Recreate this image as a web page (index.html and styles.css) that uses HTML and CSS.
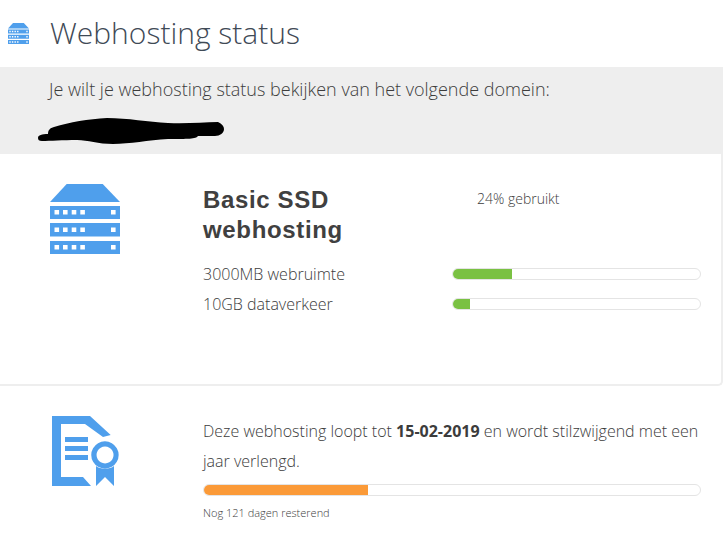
FILE: index.html
```html
<!DOCTYPE html>
<html lang="nl">
<head>
    <meta charset="UTF-8">
    <title>Webhosting status</title>
    <link rel="stylesheet" href="styles.css">
</head>
<body>
    <div class="page-title">
        <svg class="title-icon" viewBox="0 0 70 70"><use href="#server"/></svg>
        <h1>Webhosting status</h1>
    </div>

    <div class="domain-box">
        <p>Je wilt je webhosting status bekijken van het volgende domein:</p>
        <svg class="scribble" viewBox="0 0 186 28">
            <path d="M0 20 C0 17 4 16 10 16 C10 12 12 10 16 9 C32 4 50 1 69 0 C90 0 110 4 130 5 C150 6 165 4 180 4 C184 6 186 8 186 11 C186 15 182 18 177 18 L160 18 C158 21 150 21 130 21 C110 22 92 26 75 26 C60 26 50 22 39 22 C25 22 12 23 4 23 C1 23 0 22 0 20 Z" fill="#000"/>
        </svg>
    </div>

    <div class="package">
        <svg class="block-icon" viewBox="0 0 70 70">
            <g id="server" fill="#4f9fec">
                <path d="M16.7 0 H52.7 L70 18 H0 Z"/>
                <path fill-rule="evenodd" d="M0 22 H70 V35 H0 Z M4.5 26 V30.6 H9.1 V26 Z M13 26 V30.6 H17.6 V26 Z M21.7 26 V30.6 H26.3 V26 Z M30.3 26 V30.6 H34.9 V26 Z M61 26 V30.6 H65.6 V26 Z"/>
                <path fill-rule="evenodd" d="M0 39 H70 V52.5 H0 Z M4.5 43.5 V48 H9.1 V43.5 Z M13 43.5 V48 H17.6 V43.5 Z M21.7 43.5 V48 H26.3 V43.5 Z M30.3 43.5 V48 H34.9 V43.5 Z M61 43.5 V48 H65.6 V43.5 Z"/>
                <path fill-rule="evenodd" d="M0 57 H70 V70 H0 Z M4.5 61 V65.6 H9.1 V61 Z M13 61 V65.6 H17.6 V61 Z M21.7 61 V65.6 H26.3 V61 Z M30.3 61 V65.6 H34.9 V61 Z M61 61 V65.6 H65.6 V61 Z"/>
            </g>
        </svg>
        <div class="package-main">
            <div class="package-head">
                <h2>Basic SSD webhosting</h2>
                <span class="used">24% gebruikt</span>
            </div>
            <div class="usage-row">
                <span>3000MB webruimte</span>
                <div class="bar"><div class="bar-fill green" style="width: 24%"></div></div>
            </div>
            <div class="usage-row">
                <span>10GB dataverkeer</span>
                <div class="bar"><div class="bar-fill green" style="width: 7%"></div></div>
            </div>
        </div>
    </div>

    <div class="term">
        <svg class="term-icon" viewBox="0 0 67 70">
            <g fill="#4f9fec">
                <path d="M0 0 H38 L58.7 19 L51 21 L33 8 H9 V61 H31 L39 70 H0 Z"/>
                <path d="M13 21 H36 V26 H13 Z M13 30 H36 V35 H13 Z M13 39 H36 V44 H13 Z"/>
                <path fill-rule="evenodd" d="M53 25.3 A13.7 13.7 0 1 1 52.9 25.3 Z M53 30.5 A8.5 8.5 0 1 0 53.1 30.5 Z"/>
                <path d="M44 50 C48 53.5 58 53.5 62 50 V70 L53 61 L44 70 Z"/>
            </g>
        </svg>
        <div class="term-main">
            <p>Deze webhosting loopt tot <strong>15-02-2019</strong> en wordt stilzwijgend met een jaar verlengd.</p>
            <div class="bar"><div class="bar-fill orange" style="width: 33%"></div></div>
            <small>Nog 121 dagen resterend</small>
        </div>
    </div>
</body>
</html>
```

FILE: styles.css
```css
body {
    font-family: 'Open Sans', sans-serif;
    font-weight: 300;
    color: #3c3c3c;
    margin: 0;
    background: #fff;
    overflow: hidden;
}
.page-title {
    display: flex;
    align-items: center;
    height: 67px;
    padding-left: 8px;
}
.title-icon {
    width: 21px;
    height: 21px;
    margin-right: 21px;
}
h1 {
    font-size: 30px;
    line-height: 40px;
    font-weight: 300;
    color: #3f4a56;
    margin: 0;
    padding-bottom: 2px;
}
.domain-box {
    background: #eee;
    height: 87px;
    padding-left: 49px;
}
.domain-box p {
    margin: 0;
    padding-top: 10px;
    font-size: 18px;
    line-height: 25px;
}
.scribble {
    display: block;
    width: 186px;
    height: 28px;
    margin: 16px 0 0 -11px;
}
.package {
    display: flex;
    height: 232px;
    width: 723px;
    box-sizing: border-box;
    padding: 30px 22px 0 50px;
    border-right: 2px solid #eee;
    border-bottom: 2px solid #eee;
    border-bottom-right-radius: 5px;
}
.block-icon {
    width: 70px;
    height: 70px;
    flex-shrink: 0;
    margin-right: 83px;
}
.package-main {
    flex: 1;
}
.package-head {
    display: flex;
    height: 75px;
}
h2 {
    width: 150px;
    margin: 0;
    padding-top: 1px;
    font-family: 'Liberation Sans', sans-serif;
    font-size: 24px;
    line-height: 30px;
    font-weight: 700;
    letter-spacing: 0.65px;
    color: #404040;
}
.used {
    margin: 5px 0 0 124px;
    font-size: 14px;
    line-height: 20px;
}
.usage-row {
    display: grid;
    grid-template-columns: 249px 249px;
    align-items: center;
    height: 30px;
    font-size: 16px;
}
.bar {
    height: 10px;
    border: 1px solid #e4e4e4;
    border-radius: 6px;
    overflow: hidden;
}
.bar-fill {
    height: 100%;
}
.green {
    background: #7ac143;
}
.orange {
    background: #fb9a38;
}
.term {
    display: flex;
    padding: 30px 22px 0 52px;
}
.term-icon {
    width: 67px;
    height: 70px;
    flex-shrink: 0;
    margin-right: 84px;
}
.term-main {
    flex: 1;
}
.term-main p {
    margin: 0;
    font-size: 16px;
    line-height: 30px;
}
.term-main strong {
    font-weight: 700;
}
.term-main .bar {
    margin-top: 8px;
}
small {
    display: block;
    margin-top: 9px;
    font-size: 11px;
    line-height: 15px;
}
```
